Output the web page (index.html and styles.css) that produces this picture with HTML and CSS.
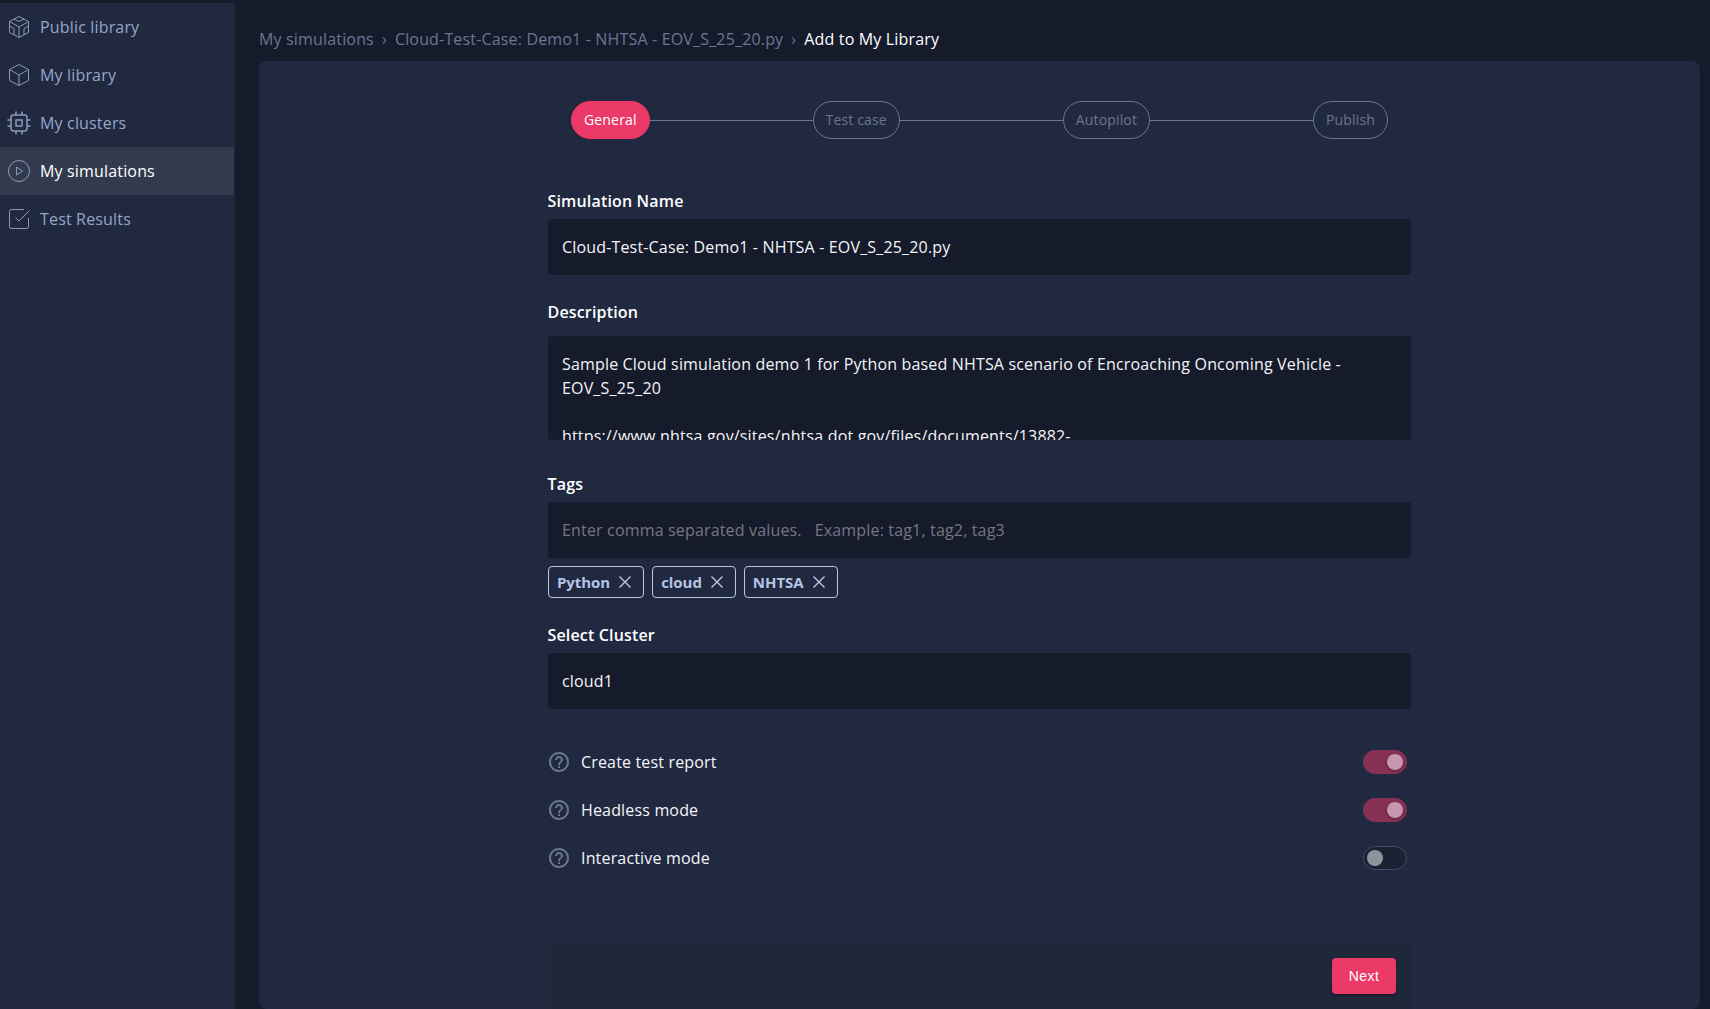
FILE: index.html
```html
<!DOCTYPE html>
<html lang="en">
<head>
<meta charset="utf-8">
<title>Add to My Library</title>
<link rel="stylesheet" href="styles.css">
</head>
<body>
<div class="app">
  <nav class="sidebar">
    <a class="nav-item">
      <svg class="nav-icon" viewBox="0 0 24 24"><path d="M12 1.500 21.500 6.500v11L12 22.500 2.500 17.500v-11zM2.500 6.500 12 12l9.500-5.500M12 12v10.500M7 4 12 6.500 17 4M2.500 11l4.500 2.500v6M21.500 11 17 13.500v6"/></svg>
      <span>Public library</span>
    </a>
    <a class="nav-item">
      <svg class="nav-icon" viewBox="0 0 24 24"><path d="M12 1.500 21.500 6.500v11L12 22.500 2.500 17.500v-11zM2.500 6.500 12 12l9.500-5.500M12 12v10.500"/></svg>
      <span>My library</span>
    </a>
    <a class="nav-item">
      <svg class="nav-icon chip" viewBox="0 0 24 24"><rect x="4" y="4" width="16" height="16" rx="2.500"/><rect x="9" y="9" width="6" height="6"/><path d="M9 4V.5M15 4V.5M9 23.500V20M15 23.500V20M4 9H.5M4 15H.5M23.500 9H20M23.500 15H20"/></svg>
      <span>My clusters</span>
    </a>
    <a class="nav-item active">
      <svg class="nav-icon" viewBox="0 0 24 24"><circle cx="12" cy="12" r="10.500"/><path d="M9.500 8v8l6-4z"/></svg>
      <span>My simulations</span>
    </a>
    <a class="nav-item">
      <svg class="nav-icon" viewBox="0 0 24 24"><path d="M17 2.500H4.500a2 2 0 0 0-2 2v15a2 2 0 0 0 2 2h15a2 2 0 0 0 2-2V11M8.500 10.500l3.500 3.500L22.500 3.500"/></svg>
      <span>Test Results</span>
    </a>
  </nav>
  <main class="content">
    <div class="breadcrumbs"><span>My simulations</span><span class="sep">›</span><span>Cloud-Test-Case: Demo1 - NHTSA - EOV_S_25_20.py</span><span class="sep">›</span><span class="current">Add to My Library</span></div>
    <section class="panel">
      <div class="steps">
        <span class="step done">General</span><i class="line"></i>
        <span class="step">Test case</span><i class="line"></i>
        <span class="step">Autopilot</span><i class="line"></i>
        <span class="step">Publish</span>
      </div>
      <form class="form">
        <label class="label">Simulation Name</label>
        <div class="field">Cloud-Test-Case: Demo1 - NHTSA - EOV_S_25_20.py</div>
        <label class="label description-label">Description</label>
        <div class="field textarea">Sample Cloud simulation demo 1 for Python based NHTSA scenario of Encroaching Oncoming Vehicle - EOV_S_25_20

https://www.nhtsa.gov/sites/nhtsa.dot.gov/files/documents/13882-</div>
        <label class="label tags-label">Tags</label>
        <div class="field placeholder">Enter comma separated values.   Example: tag1, tag2, tag3</div>
        <div class="tags">
          <span class="tag">Python<svg class="close" viewBox="0 0 12 12"><path d="M.5.5l11 11M11.500.5l-11 11"/></svg></span>
          <span class="tag">cloud<svg class="close" viewBox="0 0 12 12"><path d="M.5.5l11 11M11.500.5l-11 11"/></svg></span>
          <span class="tag">NHTSA<svg class="close" viewBox="0 0 12 12"><path d="M.5.5l11 11M11.500.5l-11 11"/></svg></span>
        </div>
        <label class="label cluster-label">Select Cluster</label>
        <div class="field">cloud1</div>
        <div class="options">
          <div class="option">
            <svg class="help" viewBox="0 0 24 24"><path d="M11 18h2v-2h-2v2zm1-16C6.480 2 2 6.480 2 12s4.480 10 10 10 10-4.480 10-10S17.520 2 12 2zm0 18c-4.410 0-8-3.590-8-8s3.590-8 8-8 8 3.590 8 8-3.590 8-8 8zm0-14c-2.210 0-4 1.790-4 4h2c0-1.100.9-2 2-2s2 .9 2 2c0 2-3 1.750-3 5h2c0-2.250 3-2.500 3-5 0-2.210-1.790-4-4-4z"/></svg>
            <span>Create test report</span><span class="toggle on"></span>
          </div>
          <div class="option">
            <svg class="help" viewBox="0 0 24 24"><path d="M11 18h2v-2h-2v2zm1-16C6.480 2 2 6.480 2 12s4.480 10 10 10 10-4.480 10-10S17.520 2 12 2zm0 18c-4.410 0-8-3.590-8-8s3.590-8 8-8 8 3.590 8 8-3.590 8-8 8zm0-14c-2.210 0-4 1.790-4 4h2c0-1.100.9-2 2-2s2 .9 2 2c0 2-3 1.750-3 5h2c0-2.250 3-2.500 3-5 0-2.210-1.790-4-4-4z"/></svg>
            <span>Headless mode</span><span class="toggle on"></span>
          </div>
          <div class="option">
            <svg class="help" viewBox="0 0 24 24"><path d="M11 18h2v-2h-2v2zm1-16C6.480 2 2 6.480 2 12s4.480 10 10 10 10-4.480 10-10S17.520 2 12 2zm0 18c-4.410 0-8-3.590-8-8s3.590-8 8-8 8 3.590 8 8-3.590 8-8 8zm0-14c-2.210 0-4 1.790-4 4h2c0-1.100.9-2 2-2s2 .9 2 2c0 2-3 1.750-3 5h2c0-2.250 3-2.500 3-5 0-2.210-1.790-4-4-4z"/></svg>
            <span>Interactive mode</span><span class="toggle"></span>
          </div>
        </div>
        <div class="actions"><button class="next" type="button">Next</button></div>
      </form>
    </section>
  </main>
</div>
</body>
</html>
```
FILE: styles.css
```css
* { box-sizing: border-box; }
body {
  margin: 0;
  background: #161b2c;
  color: #fff;
  font: 16px/24px "Open Sans", "Noto Sans", sans-serif;
  letter-spacing: .165px;
}
.app { display: flex; height: 1009px; padding-top: 3px; overflow: hidden; }
.sidebar {
  width: 235px;
  flex: none;
  background: #212940;
  border-right: 1px solid #20263b;
  color: #94a6ca;
}
.nav-item { display: flex; align-items: center; gap: 9px; height: 48px; padding-left: 7px; }
.nav-item.active { background: #323a4d; color: #fff; }
.nav-icon { width: 24px; height: 24px; fill: none; stroke: #8b99b9; stroke-width: 1; }
.chip { stroke-width: 1.5; }
.content { flex: 1; padding: 24px 10px 0 24px; display: flex; flex-direction: column; }
.breadcrumbs { display: flex; height: 34px; color: #6b7691; white-space: pre; }
.sep { width: 21px; text-align: center; }
.current { color: #fff; }
.panel { height: 948px; flex: none; background: #212940; border-radius: 8px; padding-top: 40px; }
.steps { display: flex; align-items: center; width: 817px; margin: 0 auto; }
.step {
  height: 38px;
  padding: 0 12px;
  border: 1px solid #6a7793;
  border-radius: 19px;
  color: #6b7691;
  font-size: 14px;
  line-height: 36px;
}
.step.done { background: #eb3a68; border-color: #eb3a68; color: #fff; }
.line { flex: 1; height: 1px; background: #6a7793; }
.form { width: 863px; margin: 50px auto 0; }
.label { display: block; height: 30px; margin-left: -.5px; font-weight: 600; }
.field {
  height: 56px;
  padding: 16px 14px;
  border-radius: 4px;
  background: #161b2c;
  color: #f4f5f7;
  white-space: pre-wrap;
}
.description-label { margin-top: 25px; height: 36px; }
.textarea { height: 104px; overflow: hidden; }
.tags-label { margin-top: 32px; }
.placeholder { color: #747782; }
.tags { display: flex; gap: 8px; margin-top: 8px; }
.tag {
  display: flex;
  align-items: center;
  height: 32px;
  padding: 0 12px 0 8px;
  gap: 9px;
  border: 1px solid #b9c8e8;
  border-radius: 4px;
  color: #b6c4e4;
  font-size: 15px;
  font-weight: 700;
  letter-spacing: -.05px;
}
.close { width: 12px; height: 12px; fill: none; stroke: #c2cbe0; stroke-width: 1.300; }
.cluster-label { margin-top: 25px; }
.options { margin-top: 29px; }
.option { display: flex; align-items: center; height: 48px; padding-right: 4px; color: #f4f5f7; }
.help { width: 24px; height: 24px; margin-right: 10px; margin-left: -1px; fill: #6a7793; }
.toggle {
  display: flex;
  align-items: center;
  width: 44px;
  height: 24px;
  margin-left: auto;
  padding: 0 3px;
  border: 1px solid #434b62;
  border-radius: 12px;
  background: #1a2234;
}
.toggle::before { content: ""; width: 16px; height: 16px; border-radius: 50%; background: #8f939d; }
.toggle.on { justify-content: flex-end; background: #873254; border-color: #873254; }
.toggle.on::before { background: #c598ad; box-shadow: 0 1px 3px #54213e; }
.actions {
  display: flex;
  justify-content: flex-end;
  height: 80px;
  margin: 60px -1px 0;
  padding: 16px;
  background: #1f273a;
}
.next {
  width: 64px;
  height: 36px;
  padding: 0;
  border: 0;
  border-radius: 4px;
  background: #eb3a68;
  box-shadow: 0 2px 2px #161b2c;
  color: #fff;
  font: 14px "Liberation Sans", sans-serif;
  letter-spacing: .4px;
}
```
